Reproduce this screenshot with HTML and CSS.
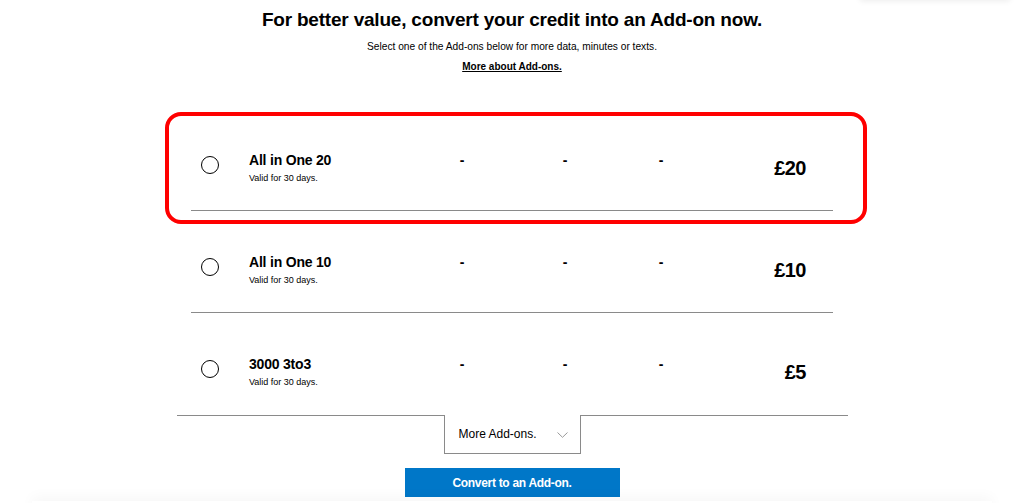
FILE: index.html
```html
<!DOCTYPE html>
<html lang="en">
<head>
<meta charset="utf-8">
<title>Convert credit to Add-on</title>
<link rel="stylesheet" href="styles.css">
</head>
<body>
<div class="corner-panel"></div>
<main class="page">
  <header class="intro">
    <h1 class="intro-title">For better value, convert your credit into an Add-on now.</h1>
    <p class="intro-text">Select one of the Add-ons below for more data, minutes or texts.</p>
    <a class="intro-link" href="#">More about Add-ons.</a>
  </header>

  <section class="addons">
    <label class="addon addon--highlight">
      <span class="radio"></span>
      <span class="addon-name">
        <span class="addon-title">All in One 20</span>
        <span class="addon-valid">Valid for 30 days.</span>
      </span>
      <span class="addon-dash">-</span>
      <span class="addon-dash">-</span>
      <span class="addon-dash">-</span>
      <span class="addon-price">£20</span>
      <span class="highlight-ring"></span>
    </label>
    <label class="addon">
      <span class="radio"></span>
      <span class="addon-name">
        <span class="addon-title">All in One 10</span>
        <span class="addon-valid">Valid for 30 days.</span>
      </span>
      <span class="addon-dash">-</span>
      <span class="addon-dash">-</span>
      <span class="addon-dash">-</span>
      <span class="addon-price">£10</span>
    </label>
    <label class="addon addon--last">
      <span class="radio"></span>
      <span class="addon-name">
        <span class="addon-title">3000 3to3</span>
        <span class="addon-valid">Valid for 30 days.</span>
      </span>
      <span class="addon-dash">-</span>
      <span class="addon-dash">-</span>
      <span class="addon-dash">-</span>
      <span class="addon-price">£5</span>
    </label>
  </section>

  <div class="more-bar">
    <span class="more-line"></span>
    <button class="more-tab" type="button">
      <span>More Add-ons.</span>
      <svg class="chevron" width="11" height="6" viewBox="0 0 11 6"><path d="M0.5 0.5 L5.5 5.3 L10.5 0.5" fill="none" stroke="#9a9a9a" stroke-width="1"/></svg>
    </button>
    <span class="more-line"></span>
  </div>

  <div class="actions">
    <button class="convert-btn" type="button">Convert to an Add-on.</button>
  </div>
  <div class="next-card"></div>
</main>
</body>
</html>
```

FILE: styles.css
```css
* { box-sizing: border-box; }

html, body {
  margin: 0;
  padding: 0;
  background: #fff;
  overflow: hidden;
}

body {
  font-family: "Liberation Sans", Arial, Helvetica, sans-serif;
  color: #000;
  height: 503px;
  position: relative;
}

.corner-panel {
  position: absolute;
  top: -30px;
  right: 14px;
  width: 150px;
  height: 30px;
  background: #fff;
  box-shadow: 0 1px 6px rgba(0, 0, 0, 0.08);
}

.page {
  display: flex;
  flex-direction: column;
  align-items: center;
  height: 503px;
  overflow: hidden;
}

.intro {
  display: flex;
  flex-direction: column;
  align-items: center;
  padding-top: 9px;
}

.intro-title {
  margin: 0;
  font-size: 19px;
  line-height: 22px;
  font-weight: 700;
  letter-spacing: -0.2px;
}

.intro-text {
  margin: 9px 0 0;
  font-size: 10.2px;
  line-height: 14px;
}

.intro-link {
  margin-top: 6px;
  font-size: 10px;
  line-height: 14px;
  font-weight: 700;
  color: #000;
  text-decoration: underline;
}

.addons {
  margin-top: 35px;
  width: 642px;
  display: flex;
  flex-direction: column;
}

.addon {
  position: relative;
  display: grid;
  grid-template-columns: 48px 163px 100px 106px 86px 1fr;
  align-items: start;
  height: 102px;
  padding: 40px 27px 0 10px;
  border-bottom: 1px solid #8a8a8a;
}

.addon--last {
  border-bottom: none;
}

.radio {
  margin-top: 7px;
  width: 18px;
  height: 18px;
  border: 1.5px solid #000;
  border-radius: 50%;
}

.addon-name {
  display: flex;
  flex-direction: column;
  margin-top: 2px;
}

.addon-title {
  font-size: 14px;
  line-height: 18px;
  font-weight: 700;
  letter-spacing: -0.2px;
}

.addon-valid {
  margin-top: 3px;
  font-size: 9px;
  line-height: 12px;
}

.addon-dash {
  margin-top: 2px;
  font-size: 14px;
  line-height: 18px;
  font-weight: 700;
  text-align: center;
}

.addon-price {
  margin-top: 7px;
  font-size: 20px;
  line-height: 24px;
  font-weight: 700;
  text-align: right;
  letter-spacing: -0.5px;
}

.highlight-ring {
  position: absolute;
  top: 3px;
  left: -26px;
  right: -34px;
  bottom: -14px;
  border: 4px solid #ff0000;
  border-radius: 16px;
  pointer-events: none;
}

.more-bar {
  display: flex;
  width: 671px;
  align-items: flex-start;
}

.more-line {
  flex: 1;
  border-top: 1px solid #8a8a8a;
}

.more-tab {
  width: 137px;
  height: 39px;
  display: flex;
  align-items: center;
  justify-content: space-between;
  padding: 0 12px 0 14px;
  background: #fff;
  border: 1px solid #8a8a8a;
  border-top: none;
  font-family: inherit;
  font-size: 12px;
  line-height: 14px;
  color: #000;
  cursor: pointer;
}

.chevron {
  display: block;
  margin-top: 1px;
}

.actions {
  margin-top: 14px;
  display: flex;
  justify-content: center;
}

.convert-btn {
  width: 215px;
  height: 29px;
  background: #0077c8;
  border: none;
  color: #fff;
  font-family: inherit;
  font-size: 12px;
  font-weight: 700;
  letter-spacing: -0.3px;
  cursor: pointer;
}

.next-card {
  flex: none;
  margin-top: 4px;
  width: 960px;
  height: 20px;
  background: #fff;
  box-shadow: 0 -4px 14px rgba(0, 0, 0, 0.035);
}
```
